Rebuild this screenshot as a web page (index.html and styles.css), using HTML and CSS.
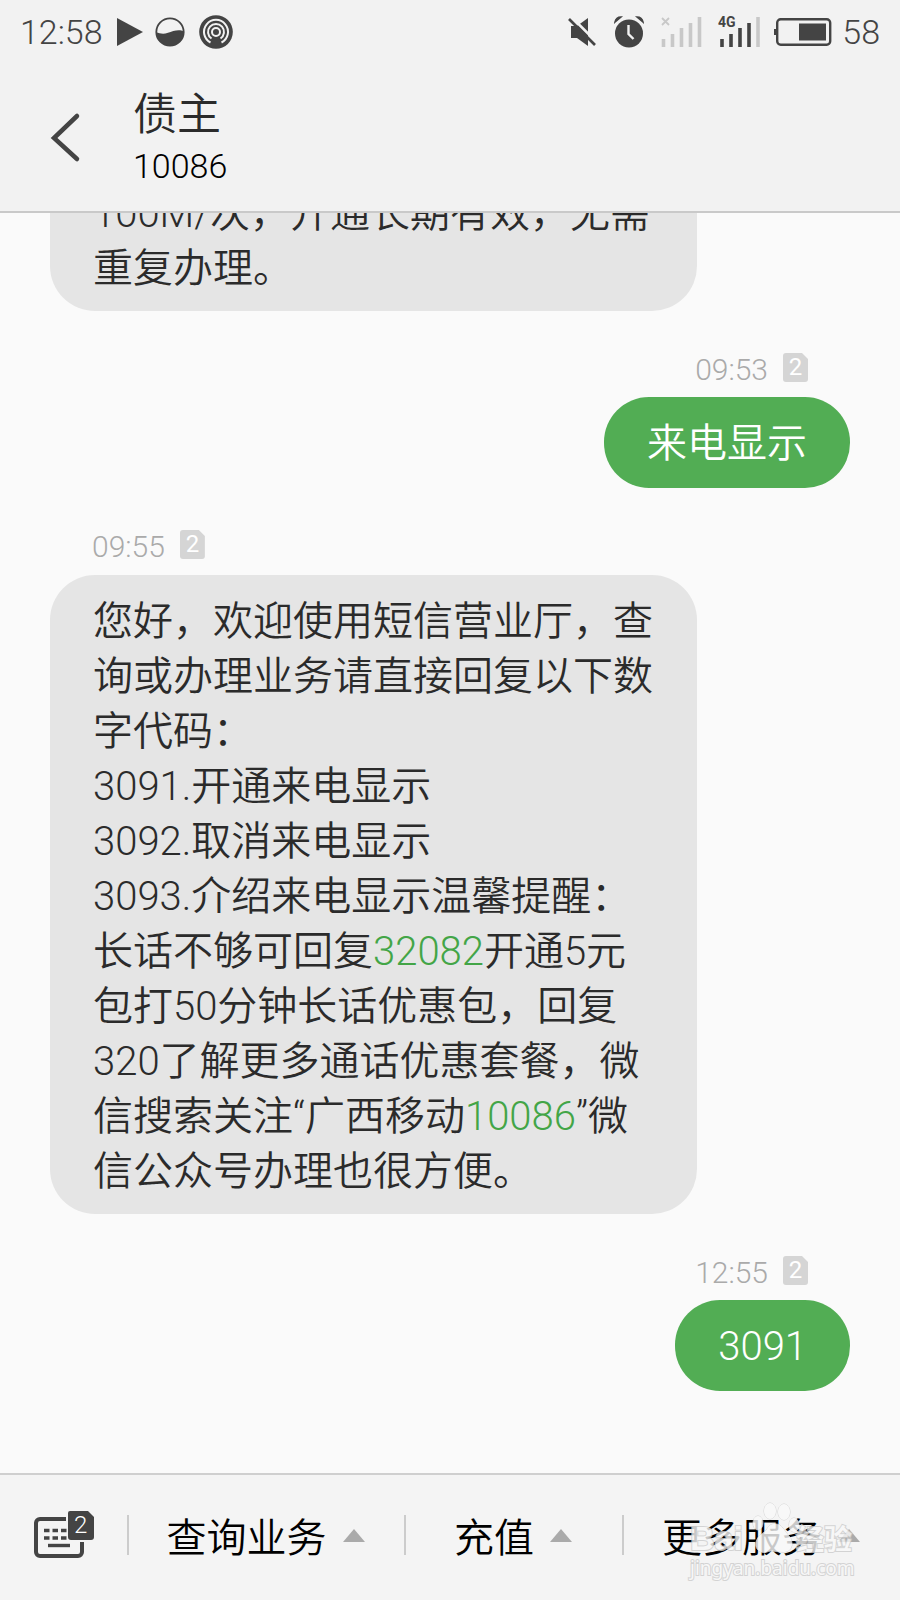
FILE: index.html
```html
<!DOCTYPE html>
<html lang="zh-CN">
<head>
<meta charset="utf-8">
<meta name="viewport" content="width=device-width">
<title>债主</title>
<link rel="stylesheet" href="styles.css">
</head>
<body>
<header class="top">
  <div class="status">
    <span>12:58</span>
    <svg class="play" width="26" height="30" viewBox="0 0 26 30"><path d="M0 1v28L26 15z" fill="#444"/></svg>
    <svg class="wave" width="30" height="30" viewBox="0 0 30 30"><circle cx="15" cy="15" r="13.700" fill="none" stroke="#444" stroke-width="1.800"/><path d="M1 15c4 1.500 7 2.500 12 .8s11-4 16-1.300a14 14 0 0 1-28 .5z" fill="#444"/></svg>
    <svg class="cast" width="34" height="34" viewBox="0 0 34 34"><circle cx="17" cy="17" r="16.800" fill="#444"/><g fill="none" stroke="#f2f2f2" stroke-width="2"><path d="M11.500 27.500a12 12 0 1 1 11 0"/><path d="M12.500 23.500a8 8 0 1 1 9 0"/><circle cx="17" cy="17" r="4"/></g><path d="M13 29l2-7h4l2 7z" fill="#444"/></svg>
    <span class="spacer"></span>
    <svg class="mute" width="28" height="30" viewBox="0 0 28 30"><path d="M3 9h6l11-8v28L9 21H3z" fill="#444"/><path d="M3.500 0l25 25" stroke="#f2f2f2" stroke-width="2.500"/><path d="M1 2l26 26" stroke="#444" stroke-width="2.600"/></svg>
    <svg class="alarm" width="30" height="32" viewBox="0 0 30 32"><circle cx="15" cy="17.500" r="14" fill="#444"/><path d="M1 6q1-5 6-5zM29 6q-1-5-6-5z" stroke="#444" stroke-width="1.500" fill="#444"/><path d="M14.500 9v9l5 5" stroke="#f2f2f2" stroke-width="2.400" fill="none"/></svg>
    <svg class="signal" width="42" height="32" viewBox="0 0 42 32"><path d="M1 2l7 7M8 2l-7 7" stroke="#c8c8c8" stroke-width="1.800"/><path d="M2.500 31v-8M11.500 31V18M20.500 31V12M29.500 31V7M38.500 31V1" stroke="#c8c8c8" stroke-width="3.600"/></svg>
    <svg class="signal4" width="42" height="32" viewBox="0 0 42 32"><text x="-1" y="11" class="net">4G</text><path d="M3 31v-8M12 31V18M21 31V12M30 31V7" stroke="#444" stroke-width="3.600"/><path d="M39 31V1" stroke="#c8c8c8" stroke-width="3.600"/></svg>
    <svg class="battery" width="58" height="28" viewBox="0 0 58 28"><rect x="3.200" y="1.200" width="53" height="25.600" rx="3.500" fill="none" stroke="#444" stroke-width="2.400"/><path d="M0 11h3v6H0z" fill="#444"/><path d="M25 5.500h27v17H25z" fill="#444"/></svg>
    <span>58</span>
  </div>
  <div class="head">
    <button class="back" aria-label="返回"><svg width="28" height="48" viewBox="0 0 28 48"><path d="M26 2L3 24 26 45" fill="none" stroke="#444" stroke-width="4.500" stroke-linecap="round"/></svg></button>
    <div>
      <h1 class="name">债主</h1>
      <p class="number">10086</p>
    </div>
  </div>
</header>
<main class="thread">
  <article class="msg in">
    <p class="bubble">100M/次，开通长期有效，无需重复办理。</p>
  </article>
  <article class="msg out">
    <div class="meta"><time>09:53</time><span class="sim">2</span></div>
    <p class="bubble">来电显示</p>
  </article>
  <article class="msg in">
    <div class="meta"><time>09:55</time><span class="sim">2</span></div>
    <p class="bubble">您好，欢迎使用短信营业厅，查询或办理业务请直接回复以下数字代码：<br>3091.开通来电显示<br>3092.取消来电显示<br>3093.介绍来电显示温馨提醒：<br>长话不够可回复<a href="#">32082</a>开通5元包打50分钟长话优惠包，回复320了解更多通话优惠套餐，微信搜索关注“广西移动<a href="#">10086</a>”微信公众号办理也很方便。</p>
  </article>
  <article class="msg out">
    <div class="meta"><time>12:55</time><span class="sim">2</span></div>
    <p class="bubble">3091</p>
  </article>
</main>
<nav class="menu">
  <button class="keys" aria-label="键盘"><svg width="60" height="48" viewBox="0 0 60 48"><path d="M32 8H6a4 4 0 0 0-4 4v29a4 4 0 0 0 4 4h38a4 4 0 0 0 4-4V31" fill="none" stroke="#444" stroke-width="4"/><path d="M10 19.500h23M10 27h23" stroke="#444" stroke-width="3.400" stroke-dasharray="5.500 3"/><path d="M14 34.500h22" stroke="#444" stroke-width="3.400"/><path d="M36 0h18l6 6v20a3 3 0 0 1-3 3H37a3 3 0 0 1-3-3V2a2 2 0 0 1 2-2z" fill="#444"/><text x="40" y="22" class="key-sim">2</text></svg></button>
  <button>查询业务<i class="up"></i></button>
  <button>充值<i class="up"></i></button>
  <button>更多服务<i class="up"></i></button>
  <div class="mark">
    <svg class="paw" width="48" height="52" viewBox="0 0 48 52"><ellipse cx="18" cy="9" rx="6" ry="8"/><ellipse cx="32" cy="10" rx="6" ry="8"/><ellipse cx="6" cy="21" rx="5" ry="7"/><ellipse cx="42" cy="23" rx="5" ry="7"/><path d="M24 22c6 0 8 7 13 12s4 16-5 16-12-2-17 0-13-2-11-10 8-8 11-13 5-5 9-5z"/></svg>
    <span class="brand">Bai<span class="cn">经验</span></span>
    <span class="site">jingyan.baidu.com</span>
  </div>
</nav>
</body>
</html>
```
FILE: styles.css
```css
* { box-sizing: border-box; }
body {
  margin: 0;
  height: 100vh;
  display: flex;
  flex-direction: column;
  background: #fafafa;
  color: #2b2b2b;
  font-family: Roboto, "Noto Sans CJK SC", sans-serif;
  font-weight: 350;
}
h1, p { margin: 0; font-weight: inherit; }
button { border: 0; padding: 0; background: none; font: inherit; color: inherit; }
svg { display: block; flex: none; overflow: visible; }

.top { background: #f2f2f2; border-bottom: 2px solid #c9c9c9; }
.status {
  height: 64px;
  padding: 0 20px;
  display: flex;
  align-items: center;
  color: #444;
  font-size: 34px;
  font-weight: 300;
}
.spacer { flex: 1; }
.play { margin-left: 14px; }
.wave { margin-left: 12px; }
.cast { margin-left: 14px; }
.alarm { margin-left: 18px; }
.signal { margin-left: 17px; }
.signal4 { margin-left: 16px; }
.battery { margin: 0 10px 0 13px; }
.net { font: 700 14px Roboto, sans-serif; fill: #444; }

.head { display: flex; align-items: center; height: 147px; padding: 0 51px; }
.back { margin-right: 54px; }
.name { font-size: 44px; line-height: 54px; padding-top: 2px; }
.number { font-size: 34px; line-height: 48px; color: #000; }

.thread {
  flex: 1;
  min-height: 0;
  overflow: hidden;
  padding: 0 50px 82px;
  display: flex;
  flex-direction: column;
  justify-content: flex-end;
  gap: 42px;
}
.msg { display: flex; flex-direction: column; align-items: flex-start; }
.out { align-items: flex-end; }
.bubble {
  max-width: 647px;
  padding: 19px 43px 15px;
  border-radius: 45px;
  background: #e5e5e5;
  font-size: 40px;
  line-height: 55px;
}
.out .bubble { background: #52ad54; color: #fff; padding: 19px 43px 17px; }
.bubble a { color: #43a547; text-decoration: none; }
.meta {
  display: flex;
  gap: 15px;
  height: 29px;
  padding: 0 42px;
  margin-bottom: 15px;
  color: #aaa;
  font-size: 30px;
  font-weight: 300;
  line-height: 34px;
}
.sim {
  width: 25px;
  height: 29px;
  border-radius: 3px;
  background: #d5d5d5;
  clip-path: polygon(0 0, 19px 0, 100% 6px, 100% 100%, 0 100%);
  color: #fff;
  font-size: 24px;
  font-weight: 400;
  line-height: 29px;
  text-align: center;
}
.in .meta { margin-bottom: 16px; }

.menu {
  position: relative;
  display: grid;
  grid-template-columns: 127fr 277fr 218fr 278fr;
  height: 127px;
  padding-bottom: 5px;
  border-top: 2px solid #cfcfcf;
  background: #f4f4f4;
  color: #000;
  font-size: 40px;
}
.menu button { display: flex; align-items: center; justify-content: center; gap: 16px; }
.menu button + button {
  background: linear-gradient(#ccc, #ccc) left center / 2px 40px no-repeat;
}
.up { border: 11px solid transparent; border-top: 0; border-bottom: 13px solid #aaa; }
.key-sim { font-size: 24px; fill: #fff; }

.mark {
  position: absolute;
  right: 48px;
  bottom: 20px;
  width: 162px;
  pointer-events: none;
  color: #f8f8f8;
  opacity: .8;
  -webkit-text-stroke: 2px #ccc;
  paint-order: stroke fill;
}
.paw { position: absolute; left: 62px; top: -18px; fill: #fafafa; stroke: #ccc; }
.brand { display: flex; justify-content: space-between; font: 700 34px/36px "Liberation Sans", sans-serif; }
.cn { font: 700 28px/36px "Noto Sans CJK SC", sans-serif; }
.site { display: block; font: 400 19px/24px "Noto Sans", sans-serif; }
```
